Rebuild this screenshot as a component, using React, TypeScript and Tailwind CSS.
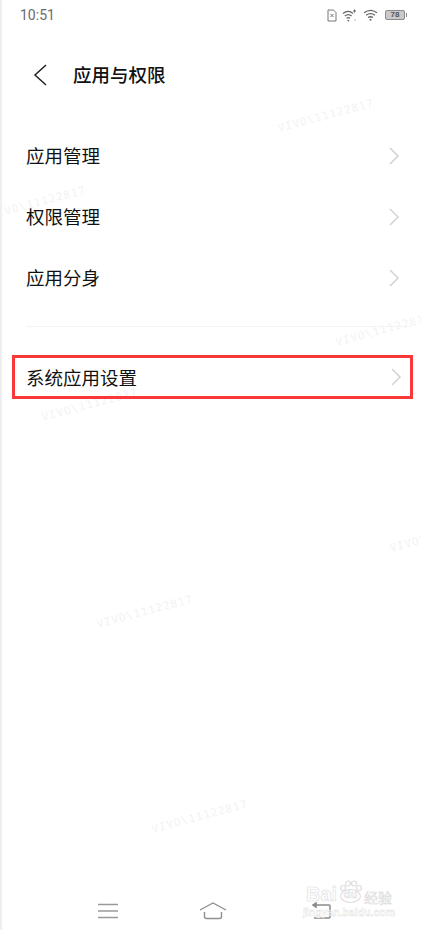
const font = { fontFamily: '"Noto Sans CJK SC", "Noto Sans", sans-serif' };

function Chevron() {
  return (
    <svg width="12" height="18" viewBox="0 0 12 18" fill="none" stroke="#d2d2d2" strokeWidth="1.5" className="shrink-0">
      <path d="M2 1 L10 9 L2 17" />
    </svg>
  );
}

function Row({ label }: { label: string }) {
  return (
    <div className="relative z-10 flex h-[61px] items-center justify-between pl-[24px] pr-[21px] text-[18.5px] leading-none text-[#111]">
      <span>{label}</span>
      <Chevron />
    </div>
  );
}

const marks = [
  "left-[276px] top-[123px]",
  "left-[-12px] top-[210px]",
  "left-[334px] top-[337px]",
  "left-[40px] top-[412px]",
  "left-[388px] top-[543px]",
  "left-[95px] top-[619px]",
  "left-[150px] top-[824px]",
];

function StatusIcons() {
  return (
    <div className="flex items-center">
      <svg width="10" height="13" viewBox="0 0 10 13" fill="none" stroke="#777" strokeWidth="1">
        <path d="M1 1h5.500L9 3.500V12H1z" />
        <path d="M3.500 5l3 3M6.500 5l-3 3" />
      </svg>
      <svg width="16" height="13" viewBox="0 0 16 13" fill="none" stroke="#666" strokeWidth="1.300" className="ml-[5px]">
        <path d="M1 4.500c3.500-2.800 7-2.800 10 0" />
        <path d="M2.800 7c2.500-1.800 4.800-1.800 6.800 0" />
        <path d="M4.600 9.300c1.300-.9 2.200-.9 3.400 0" />
        <circle cx="6.300" cy="11.600" r=".9" fill="#666" stroke="none" />
        <path d="M12.500 .5v3M11 2h3" strokeWidth="1" />
        <circle cx="13" cy="11" r=".6" fill="#666" stroke="none" />
      </svg>
      <svg width="15" height="12" viewBox="0 0 15 12" fill="none" stroke="#666" strokeWidth="1.300" className="ml-[5px]">
        <path d="M1 3.800c4-3 9-3 13 0" />
        <path d="M3 6.200c3-2 6-2 9 0" />
        <path d="M5 8.500c1.700-1 3.300-1 5 0" />
        <circle cx="7.500" cy="10.700" r="1" fill="#666" stroke="none" />
      </svg>
      <div className="ml-[7px] flex items-center">
        <div className="flex h-[10px] w-[20px] items-center justify-center rounded-[2px] border border-[#8a8a8a] bg-[#c9c9c9] font-['Liberation_Sans'] text-[8px] font-bold leading-none text-[#555]">
          78
        </div>
        <div className="ml-[1px] h-[4px] w-[1px] bg-[#8a8a8a]" />
      </div>
    </div>
  );
}

export default function App() {
  return (
    <div className="relative h-[930px] w-[421px] overflow-hidden border-l-2 border-[#efefef] bg-white" style={font}>
      <div className="flex h-[30px] items-center justify-between pl-[18px] pr-[14px]">
        <span className="font-['Roboto'] text-[14px] leading-none text-[#6b6b6b]">10:51</span>
        <StatusIcons />
      </div>

      <div className="mt-[25px] flex h-[40px] items-center pl-[31px]">
        <svg width="14" height="22" viewBox="0 0 14 22" fill="none" stroke="#222" strokeWidth="1.500">
          <path d="M13 1 L2 11 L13 21" />
        </svg>
        <span className="mb-[2px] ml-[26px] text-[18.5px] font-medium leading-none text-[#111]">应用与权限</span>
      </div>

      <div className="mt-[30px] flex flex-col">
        <Row label="应用管理" />
        <Row label="权限管理" />
        <Row label="应用分身" />
      </div>

      <div className="ml-[24px] mr-[10px] mt-[18px] h-px bg-[#f3f3f3]" />

      <div className="relative z-10 ml-[10px] mr-[8px] mt-[28px] flex h-[44px] items-center justify-between border-[3px] border-[#fb3838] pl-[11px] pr-[8px] text-[18.5px] leading-none text-[#111]">
        <span>系统应用设置</span>
        <Chevron />
      </div>

      {marks.map((pos) => (
        <span
          key={pos}
          aria-hidden
          className={`absolute ${pos} origin-left -rotate-[15deg] whitespace-nowrap font-['DejaVu_Sans_Mono'] text-[11px] leading-none tracking-[1px] text-[#f3f3f3]`}
        >
          VIVO\11122817
        </span>
      ))}

      <div className="mt-[503px] flex items-center">
        <svg width="20" height="16" viewBox="0 0 20 16" fill="none" stroke="#999" strokeWidth="1.500" className="ml-[96px]">
          <path d="M0 1.500h20M0 8h20M0 14.500h20" />
        </svg>
        <svg width="28" height="18" viewBox="0 0 28 18" fill="none" stroke="#8f8f8f" strokeWidth="1.400" className="ml-[81px]">
          <path d="M1 8 L14 1 L27 8" />
          <path d="M5.500 10v4.500a2 2 0 0 0 2 2h13a2 2 0 0 0 2-2V10" />
        </svg>
        <svg width="19" height="18" viewBox="0 0 19 18" fill="none" stroke="#8a8a8a" strokeWidth="1.500" className="ml-[85px]">
          <path d="M4 3h13a1 1 0 0 1 1 1v11a1 1 0 0 1-1 1H2" />
          <path d="M4 1v4L1 3z" fill="#8a8a8a" />
        </svg>
      </div>

      <div className="absolute left-[302px] top-[880px] flex w-[90px] flex-col items-center font-['Liberation_Sans'] text-white/80 [-webkit-text-stroke:0.6px_#dcdcdc]">
        <div className="flex items-end text-[20px] font-bold leading-none">
          <span>Bai</span>
          <span className="relative block h-[24px] w-[27px]">
            <svg width="27" height="24" viewBox="0 0 27 24" fill="none" stroke="#dedede" strokeWidth="1.200">
              <ellipse cx="13.500" cy="16" rx="10" ry="6.500" />
              <circle cx="6" cy="8" r="2.500" />
              <circle cx="11" cy="3.500" r="2.500" />
              <circle cx="17" cy="3.500" r="2.500" />
              <circle cx="22" cy="8" r="2.500" />
            </svg>
            <span className="absolute inset-x-0 bottom-[4px] text-center text-[11px] leading-none">du</span>
          </span>
          <span className="w-[28px] whitespace-nowrap text-[14px] font-normal" style={font}>经验</span>
        </div>
        <span className="mt-[3px] whitespace-nowrap text-[10.5px] font-bold leading-none [-webkit-text-stroke:0.4px_#dcdcdc]">jingyan.baidu.com</span>
      </div>
    </div>
  );
}
